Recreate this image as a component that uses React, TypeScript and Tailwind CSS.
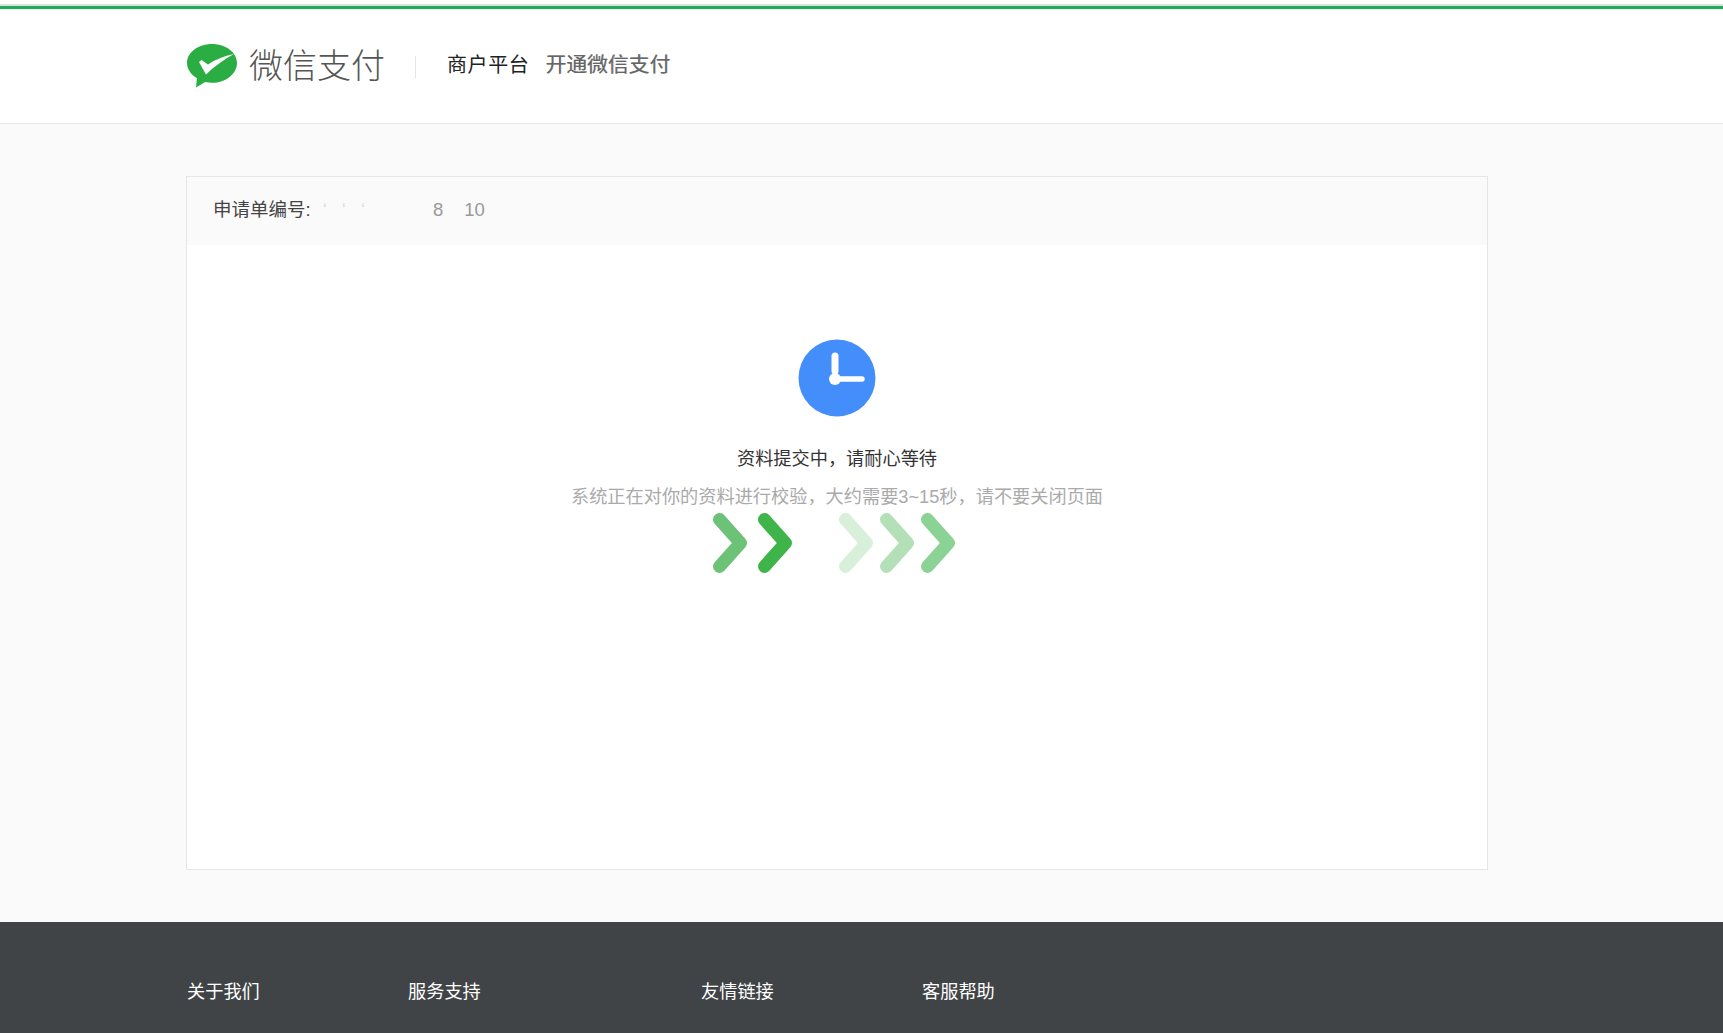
const cjk = "font-['Liberation_Sans','Noto_Sans_CJK_SC',sans-serif]";

function Logo() {
  return (
    <svg width="50" height="44" viewBox="0 0 50 44" className="shrink-0 mb-[2px]">
      <path
        d="M25 0C11.200 0 0 8.500 0 19c0 6.200 3.900 11.700 9.900 15.200L9 43.500l9.200-5.500c2.200.5 4.400.8 6.800.8 13.800 0 25-8.900 25-19.800C50 8.500 38.800 0 25 0z"
        fill="#2aae43"
      />
      <path d="M12 18l2.500-2 6.500 4.500C28 15.500 37 12 47 10 37 15.500 27.500 22 19 30.500L12 18z" fill="#fff" />
    </svg>
  );
}

function Chevron({ color }: { color: string }) {
  return (
    <svg width="34" height="60" viewBox="0 0 34 60" className="shrink-0">
      <path d="M6.500 6.500L27.500 30 6.500 53.500" fill="none" stroke={color} strokeWidth="13" strokeLinecap="round" strokeLinejoin="round" />
    </svg>
  );
}

export default function App() {
  return (
    <div className={`h-[1033px] overflow-hidden bg-[#fafafa] flex flex-col ${cjk}`}>
      <div className="bg-white h-[4px] shrink-0" />
      <div className="h-[2px] bg-[#d3e8da] shrink-0" />
      <div className="h-[3px] bg-[#2aa75f] shrink-0" />
      <header className="h-[115px] bg-white border-t border-t-[#e2fbf0] border-b border-b-[#e9e9e9] flex items-center pl-[187px] shrink-0">
        <Logo />
        <span className="ml-[12px] mb-[2px] text-[34px] leading-[44px] font-light text-[#555]">微信支付</span>
        <span className="ml-[30px] w-px h-[22px] bg-[#e6e6e6]" />
        <span className="ml-[31px] mb-[4px] text-[20px] tracking-[0.6px] text-[#222]">商户平台</span>
        <span className="ml-[16px] mb-[4px] text-[20.800px] text-[#666] [text-shadow:0.6px_0_0_#aaa]">开通微信支付</span>
      </header>
      <main className="flex-1 px-[186px] pt-[52px] pb-[52px] min-h-0">
        <div className="w-[1302px] h-[694px] bg-white border border-[#e6e6e6] flex flex-col">
          <div className="h-[68px] bg-[#fafafa] flex items-center pl-[26px] pb-[2px] text-[18.500px] shrink-0">
            <span className="text-[#444]">申请单编号:</span>
            <span className="ml-[12px] text-[#ddd]">‘</span>
            <span className="ml-[15px] text-[#ddd]">‘</span>
            <span className="ml-[15px] text-[#ddd]">‘</span>
            <span className="ml-[68px] text-[#999]">8</span>
            <span className="ml-[21px] text-[#999]">10</span>
          </div>
          <div className="flex flex-col items-center pt-[94px]">
            <svg width="78" height="78" viewBox="0 0 78 78">
              <circle cx="39" cy="39" r="38.500" fill="#448efb" />
              <path d="M37 17v15" stroke="#fff" strokeWidth="7" strokeLinecap="round" fill="none" />
              <path d="M37 40h27" stroke="#fff" strokeWidth="5.500" strokeLinecap="round" fill="none" />
              <circle cx="37" cy="40" r="6" fill="#fff" />
            </svg>
            <p className="mt-[28px] text-[18.200px] leading-[28px] text-[#333]">资料提交中，请耐心等待</p>
            <p className="mt-[10px] text-[18.200px] leading-[28px] text-[#aaa]">系统正在对你的资料进行校验，大约需要3~15秒，请不要关闭页面</p>
            <div className="mt-[2px] flex items-center ml-[-6px]">
              <div className="flex gap-[11px]">
                <Chevron color="#6cc276" />
                <Chevron color="#3fb44b" />
              </div>
              <div className="ml-[47px] flex gap-[6.700px]">
                <Chevron color="#d8efd9" />
                <Chevron color="#b4e0b8" />
                <Chevron color="#8bd394" />
              </div>
            </div>
          </div>
        </div>
      </main>
      <footer className="h-[111px] bg-[#404446] pt-[56px] pl-[187px] flex text-[18.200px] leading-[28px] text-white shrink-0">
        <span className="w-[221px]">关于我们</span>
        <span className="w-[293px]">服务支持</span>
        <span className="w-[221px]">友情链接</span>
        <span>客服帮助</span>
      </footer>
    </div>
  );
}
